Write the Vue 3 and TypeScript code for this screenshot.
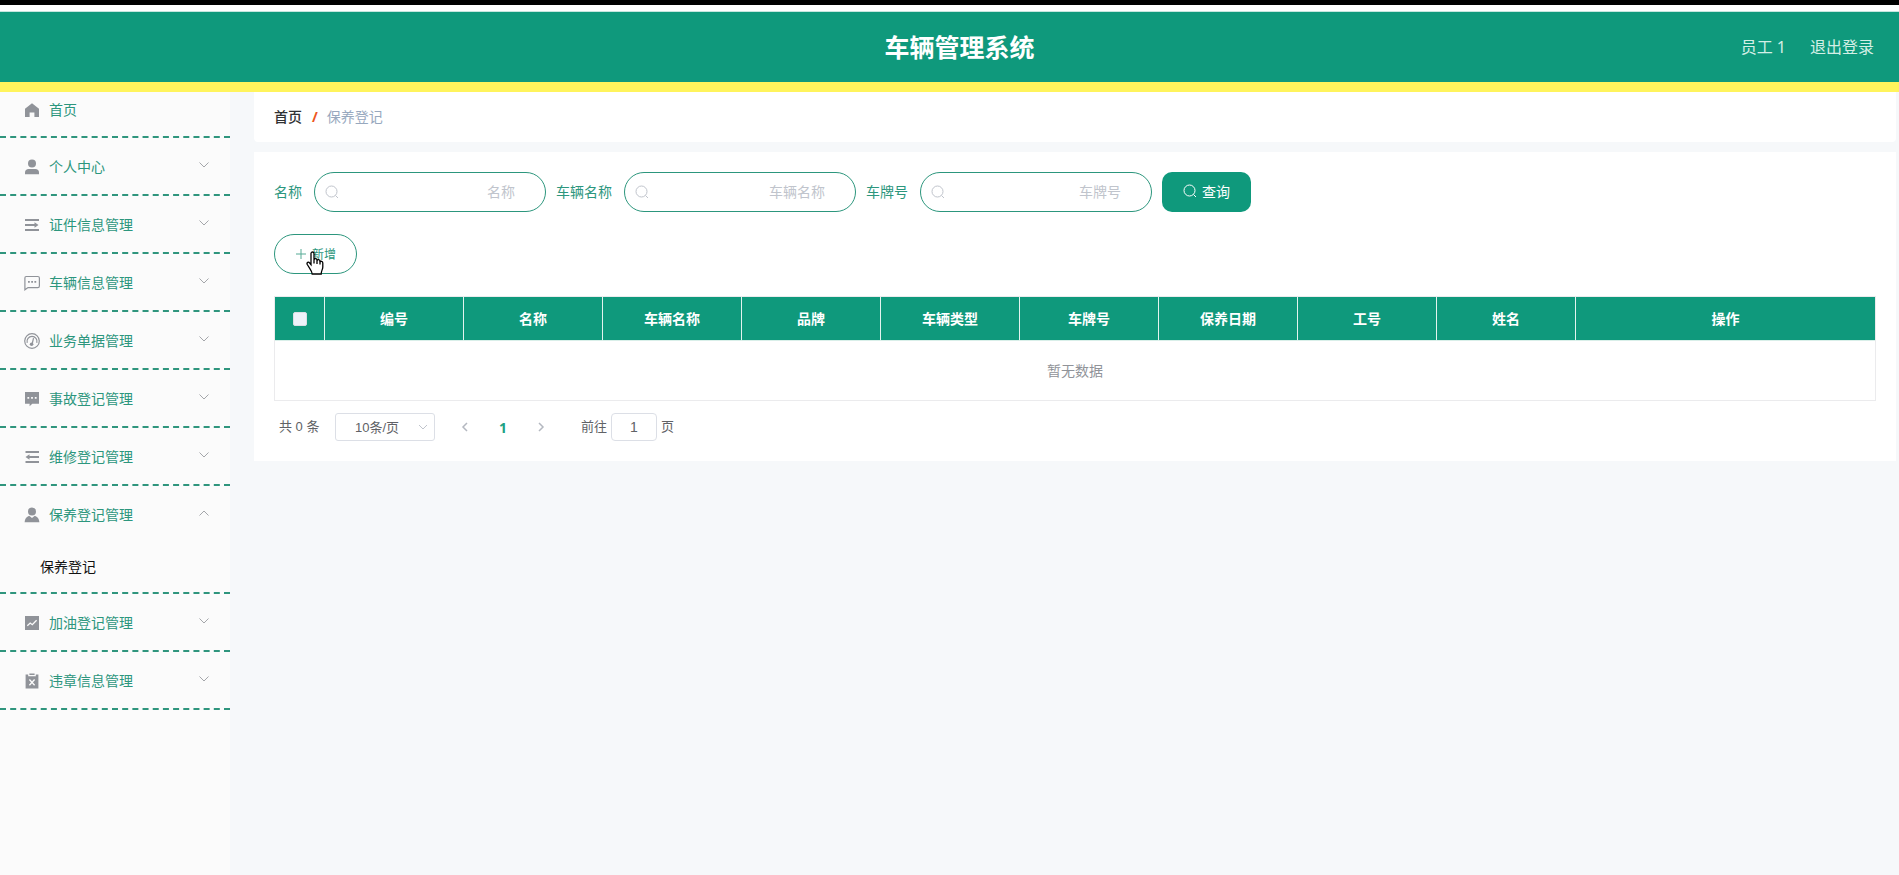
<script setup lang="ts">
import { ref } from 'vue'

interface MenuItem {
  label: string
  icon: string
  arrow: boolean
  children?: string[]
}

const menu: MenuItem[] = [
  { label: '首页', icon: 'home', arrow: false },
  { label: '个人中心', icon: 'user', arrow: true },
  { label: '证件信息管理', icon: 'unfold', arrow: true },
  { label: '车辆信息管理', icon: 'chat', arrow: true },
  { label: '业务单据管理', icon: 'gauge', arrow: true },
  { label: '事故登记管理', icon: 'comment', arrow: true },
  { label: '维修登记管理', icon: 'fold', arrow: true },
  { label: '保养登记管理', icon: 'custom', arrow: true, children: ['保养登记'] },
  { label: '加油登记管理', icon: 'chart', arrow: true },
  { label: '违章信息管理', icon: 'release', arrow: true },
]

const fields = [
  { id: 'name', label: '名称' },
  { id: 'vehicle', label: '车辆名称' },
  { id: 'plate', label: '车牌号' },
]

const columns = ['编号', '名称', '车辆名称', '品牌', '车辆类型', '车牌号', '保养日期', '工号', '姓名']

const query = ref<Record<string, string>>({ name: '', vehicle: '', plate: '' })
const pageSize = ref('10')
const jump = ref('1')
const allChecked = ref(false)
</script>

<template>
  <div class="page">
    <div class="strip"></div>
    <header class="header">
      <h1 class="title">车辆管理系统</h1>
      <div class="account">
        <span>员工 1</span>
        <a href="#" class="logout">退出登录</a>
      </div>
    </header>

    <div class="body">
      <nav class="sidebar">
        <ul class="menu">
          <li v-for="item in menu" :key="item.label" class="menu-item">
            <a href="#" class="menu-link">
              <svg class="menu-icon" viewBox="0 0 16 16" aria-hidden="true">
                <path v-if="item.icon === 'home'" d="M8 1.3 15 6.8V15H10.4V10.6H5.6V15H1V6.8z" />
                <g v-else-if="item.icon === 'user'">
                  <circle cx="8" cy="4.6" r="4" />
                  <path d="M1 15.2V13.5C1 11.4 2.5 10 4.6 10H11.4C13.5 10 15 11.4 15 13.5V15.2z" />
                </g>
                <path v-else-if="item.icon === 'unfold'" d="M1 2H15V4H1zM1 7H10.500V9H1zM1 12H15V14H1zM10.500 5.300 14.500 8 10.500 10.700z" />
                <g v-else-if="item.icon === 'chat'">
                  <path class="line" d="M2.200 1.500H13.800Q15.400 1.500 15.400 3.100V11Q15.400 12.600 13.800 12.600H4L.9 14.800V3Q.9 1.500 2.200 1.500z" />
                  <path d="M4 6H5.800V7.800H4zM7.200 6H9V7.800H7.200zM10.400 6H12.200V7.800H10.400z" />
                </g>
                <g v-else-if="item.icon === 'gauge'">
                  <circle class="line" cx="8" cy="8" r="7.300" />
                  <path class="line" d="M3.200 9.800A5 5 0 1 1 12.800 9.800M8.400 10 9.500 5.200" />
                  <circle cx="7.600" cy="11.200" r="1.800" />
                </g>
                <path v-else-if="item.icon === 'comment'" fill-rule="evenodd" d="M1 1H15V12.700H8.300L5.600 15.300V12.700H1zM3.400 6V7.800H5.200V6zM7.100 6V7.800H8.900V6zM10.800 6V7.800H12.600V6z" />
                <path v-else-if="item.icon === 'fold'" d="M1.500 2H15V4H1.500zM5.500 7H15V9H5.500zM1.500 12H15V14H1.500zM5.500 5.300 1.500 8 5.500 10.700z" />
                <g v-else-if="item.icon === 'custom'">
                  <circle cx="8" cy="4.500" r="4" />
                  <path d="M.6 15.300C.8 11.800 2.500 9.500 5.200 8.700L8 10.900 10.800 8.700C13.500 9.500 15.200 11.800 15.400 15.300z" />
                </g>
                <g v-else-if="item.icon === 'chart'">
                  <path d="M1 1H15V15H1z" />
                  <path class="cut" d="M3.300 10.800 6.200 8 8.300 9.700 12.600 5.200" />
                </g>
                <g v-else>
                  <path d="M5.400.5H10.600V2H5.400zM1.600 1.500H4.200V3.200H11.800V1.500H14.400V15.500H1.600z" />
                  <path class="cut" d="M5.400 6.500 10.600 12.300M10.600 6.500 5.400 12.300" />
                </g>
              </svg>
              <span class="menu-text">{{ item.label }}</span>
              <svg v-if="item.arrow" class="arrow" :class="{ open: item.children }" viewBox="0 0 12 12" aria-hidden="true">
                <path d="M1.500 3.500 6 8 10.500 3.500" />
              </svg>
            </a>
            <a v-for="child in item.children" :key="child" href="#" class="submenu-link">{{ child }}</a>
          </li>
        </ul>
      </nav>

      <main class="main">
        <div class="card crumbs">
          <a href="#" class="crumb-home">首页</a>
          <span class="slash">/</span>
          <span class="crumb-current">保养登记</span>
        </div>

        <section class="card content">
          <form class="search" @submit.prevent>
            <div v-for="field in fields" :key="field.id" class="field">
              <label :for="field.id">{{ field.label }}</label>
              <div class="input-wrap">
                <svg class="search-icon" viewBox="0 0 14 14" aria-hidden="true">
                  <circle cx="6.500" cy="6.500" r="5.500" />
                  <path d="M10.500 10.500 13 13" />
                </svg>
                <input :id="field.id" v-model="query[field.id]" type="text" :placeholder="field.label" />
              </div>
            </div>
            <button type="submit" class="query-btn">
              <svg class="btn-icon" viewBox="0 0 14 14" aria-hidden="true">
                <circle cx="6.500" cy="6.500" r="5.500" />
                <path d="M10.500 10.500 13 13" />
              </svg>
              <span>查询</span>
            </button>
          </form>

          <div class="actions">
            <button type="button" class="add-btn">
              <svg class="plus" viewBox="0 0 12 12" aria-hidden="true"><path d="M6 1V11M1 6H11" /></svg>
              <span>新增</span>
            </button>
            <svg class="pointer" viewBox="0 0 18 24" aria-hidden="true">
              <path d="M5 2.500C5 .5 8 .5 8 2.500V9C8 7.200 11 7.200 11 9V9.800C11.300 8.200 14 8.400 14 10.200V11C14.400 9.800 16.800 10 16.800 12V16C16.800 18.500 15.200 19.500 15.200 23H6.200C6.200 20 3.500 17.500 1.300 13.500 .3 11.500 2.500 10.300 3.700 12L5 13.700z" />
              <path d="M8 9V12.500M11 9.500V13M14 10.500V13.500" />
            </svg>
          </div>

          <table class="table">
            <colgroup>
              <col class="col-check" />
              <col v-for="column in columns" :key="column" class="col-data" />
              <col />
            </colgroup>
            <thead>
              <tr>
                <th><input v-model="allChecked" type="checkbox" class="check" aria-label="全选" /></th>
                <th v-for="column in columns" :key="column">{{ column }}</th>
                <th>操作</th>
              </tr>
            </thead>
            <tbody>
              <tr><td class="empty" colspan="11">暂无数据</td></tr>
            </tbody>
          </table>

          <div class="pager">
            <span class="total">共 0 条</span>
            <div class="size">
              <select v-model="pageSize" aria-label="每页条数">
                <option value="10">10条/页</option>
                <option value="20">20条/页</option>
              </select>
              <svg class="size-arrow" viewBox="0 0 12 12" aria-hidden="true"><path d="M2 4 6 8 10 4" /></svg>
            </div>
            <button type="button" class="step" aria-label="上一页" disabled>
              <svg viewBox="0 0 12 12"><path d="M8 2 4 6 8 10" /></svg>
            </button>
            <button type="button" class="number">1</button>
            <button type="button" class="step" aria-label="下一页" disabled>
              <svg viewBox="0 0 12 12"><path d="M4 2 8 6 4 10" /></svg>
            </button>
            <label class="jump">前往<input v-model="jump" type="text" />页</label>
          </div>
        </section>
      </main>
    </div>
  </div>
</template>

<style>
body {
  margin: 0;
}
</style>

<style scoped>
* {
  box-sizing: border-box;
}

.page {
  display: flex;
  flex-direction: column;
  min-height: 100vh;
  background: #f6f8fa;
  color: #606266;
  font-family: "Noto Sans", "Noto Sans CJK SC", sans-serif;
  font-size: 14px;
}

a {
  color: inherit;
  text-decoration: none;
}

button,
input,
select {
  font-family: inherit;
  margin: 0;
}

svg {
  flex: none;
  fill: none;
  stroke: currentColor;
}

.strip {
  height: 12px;
  background: #fff;
  border-top: 5px solid #000;
  border-bottom: 1px solid #c5e6df;
}

.header {
  position: relative;
  z-index: 1;
  display: grid;
  grid-template-columns: 1fr auto 1fr;
  align-items: center;
  height: 80px;
  padding: 0 25px;
  background: #0f997c;
  border-bottom: 10px solid #fff45c;
}

.title {
  grid-column: 2;
  margin: 0;
  padding-left: 20px;
  color: #fff;
  font-size: 25px;
  font-weight: 700;
  line-height: 36px;
}

.account {
  display: flex;
  justify-content: flex-end;
  gap: 24px;
  color: #d4efe6;
  font-size: 16px;
  line-height: 24px;
}

.body {
  display: flex;
  flex: 1;
}

.sidebar {
  flex: none;
  width: 230px;
  margin-top: -12px;
  background: #fbfbfb;
}

.menu {
  margin: 0;
  padding: 0;
  list-style: none;
}

.menu-item {
  border-bottom: 2px dashed #2f957d;
}

.menu-link {
  display: flex;
  align-items: center;
  height: 56px;
  padding: 2px 20px 0 24px;
  color: #2c967d;
}

.menu-item:first-child .menu-link {
  padding-top: 4px;
}

.menu-icon {
  width: 16px;
  height: 16px;
  margin-right: 9px;
  fill: #909399;
  stroke: none;
}

.menu-icon .line {
  fill: none;
  stroke: #909399;
  stroke-width: 1.2;
}

.menu-icon .cut {
  fill: none;
  stroke: #fbfbfb;
  stroke-width: 1.3;
}

.menu-text {
  flex: 1;
  line-height: 20px;
}

.arrow {
  width: 12px;
  height: 12px;
  margin: 0 0 4px;
  color: #a4a6aa;
}

.arrow.open {
  transform: rotate(180deg);
}

.submenu-link {
  display: block;
  height: 50px;
  padding-left: 40px;
  color: #111;
  line-height: 50px;
}

.main {
  display: flex;
  flex: 1;
  flex-direction: column;
  gap: 10px;
  min-width: 0;
  padding: 0 3px 20px 24px;
}

.card {
  background: #fff;
}

.crumbs {
  display: flex;
  align-items: center;
  height: 50px;
  padding: 0 20px 2px;
  border-radius: 0 0 4px 4px;
}

.crumb-home {
  color: #303133;
  font-weight: 500;
}

.slash {
  margin: 0 9px 0 10px;
  color: #ee5521;
  font-weight: 700;
}

.crumb-current {
  color: #97a8be;
}

.content {
  padding: 20px;
}

.search {
  display: flex;
  flex-wrap: wrap;
  gap: 10px;
}

.field {
  display: flex;
  align-items: center;
  gap: 12px;
  color: #2c967d;
}

.field label {
  padding-bottom: 2px;
}

.input-wrap {
  position: relative;
}

.input-wrap input {
  display: block;
  width: 232px;
  height: 40px;
  padding: 0 30px 2px;
  border: 1px solid #2c967d;
  border-radius: 20px;
  outline: none;
  background: #fff;
  color: #606266;
  font-size: 14px;
  text-align: right;
}

.input-wrap input::placeholder {
  color: #c0c4cc;
}

.search-icon {
  position: absolute;
  top: 13px;
  left: 11px;
  width: 14px;
  height: 14px;
  color: #c0c4cc;
}

.query-btn {
  display: flex;
  align-items: center;
  justify-content: center;
  gap: 5px;
  width: 89px;
  height: 40px;
  padding: 0 0 2px;
  border: 0;
  border-radius: 10px;
  background: #0f997c;
  color: #fff;
  font-size: 14px;
}

.btn-icon {
  width: 14px;
  height: 14px;
}

.actions {
  position: relative;
  margin: 22px 0;
}

.add-btn {
  display: flex;
  align-items: center;
  justify-content: center;
  gap: 5px;
  width: 83px;
  height: 40px;
  padding: 0;
  border: 1px solid #2c967d;
  border-radius: 20px;
  background: #fff;
  color: #2c967d;
  font-size: 12px;
}

.plus {
  width: 12px;
  height: 12px;
  opacity: 0.8;
}

.pointer {
  position: absolute;
  top: 17px;
  left: 32px;
  width: 18px;
  height: 24px;
  fill: #fff;
  stroke: #000;
  stroke-width: 1.3;
}

.table {
  width: 100%;
  border: 1px solid #ebebed;
  border-spacing: 0;
  table-layout: fixed;
}

.col-check {
  width: 50px;
}

.col-data {
  width: 139px;
}

.table th {
  height: 44px;
  padding: 0 0 2px;
  border-right: 1px solid #e3f3ef;
  border-bottom: 1px solid #d9efe9;
  background: #0f997c;
  color: #fff;
  font-weight: 700;
}

.table th:last-child {
  border-right: 0;
}

.check {
  display: block;
  width: 14px;
  height: 14px;
  margin: 2px auto 0;
  border: 1px solid #dcdfe6;
  border-radius: 2px;
  appearance: none;
  background: #edf2fa;
}

.check:checked {
  background: #409eff;
}

.empty {
  height: 59px;
  padding: 0 0 2px;
  color: #909399;
  text-align: center;
}

.pager {
  display: flex;
  align-items: center;
  height: 28px;
  margin-top: 12px;
  padding-left: 5px;
  font-family: "Liberation Sans", "Noto Sans CJK SC", sans-serif;
  font-size: 13px;
  line-height: 26px;
}

.total {
  width: 56px;
}

.size {
  position: relative;
}

.size select {
  display: block;
  width: 100px;
  height: 28px;
  padding: 0 25px 0 19px;
  border: 1px solid #dcdfe6;
  border-radius: 3px;
  appearance: none;
  background: #fff;
  color: #606266;
  font-size: 13px;
}

.size-arrow {
  position: absolute;
  top: 8px;
  right: 6px;
  width: 12px;
  height: 12px;
  color: #c0c4cc;
  pointer-events: none;
}

.step,
.number {
  display: flex;
  align-items: center;
  justify-content: center;
  width: 38px;
  height: 28px;
  padding: 0;
  border: 0;
  background: none;
}

.step {
  color: #b4b8c0;
}

.size + .step {
  margin-left: 11px;
}

.step svg {
  width: 12px;
  height: 12px;
  stroke-width: 1.5;
}

.number {
  color: #20a084;
  font-family: "Noto Sans", sans-serif;
  font-size: 14px;
  font-weight: 700;
}

.jump {
  display: flex;
  align-items: center;
  gap: 4px;
  margin-left: 21px;
}

.jump input {
  width: 46px;
  height: 28px;
  padding: 0;
  border: 1px solid #dcdfe6;
  border-radius: 4px;
  outline: none;
  color: #606266;
  font-size: 14px;
  text-align: center;
}
</style>
